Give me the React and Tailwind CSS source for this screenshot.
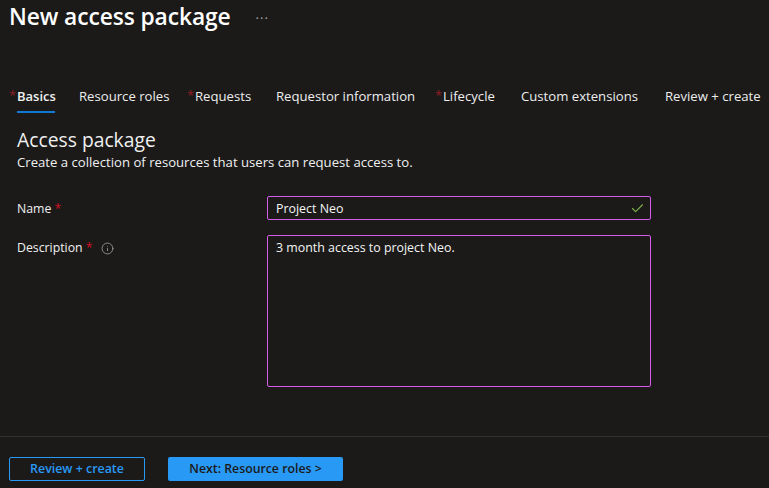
import { Check, Info } from "lucide-react";

const tabs = [
  { label: "Basics", width: "w-[62px]", required: true, active: true },
  { label: "Resource roles", width: "w-[116px]" },
  { label: "Requests", width: "w-[81px]", required: true },
  { label: "Requestor information", width: "w-[167px]" },
  { label: "Lifecycle", width: "w-[78px]", required: true },
  { label: "Custom extensions", width: "w-[144px]" },
  { label: "Review + create", width: "w-[104px]" },
];

function Tab({ label, width, required, active }) {
  return (
    <div className={`relative shrink-0 whitespace-nowrap ${width}`}>
      {required && (
        <span className="absolute -left-[8px] -top-[1px] text-[13px] leading-[20px] text-[#8f1d26]">*</span>
      )}
      <span className={`block h-[27px] leading-[20px] ${active ? "w-[38px] border-b-2 border-[#0f78d4] text-[13px] font-semibold text-[#f0f0f0]" : "text-[13.15px] text-[#ededed]"}`}>
        {label}
      </span>
    </div>
  );
}

export default function App() {
  return (
    <div className="flex h-[488px] w-[769px] flex-col overflow-hidden bg-[#1b1a19] font-['Open_Sans','Noto_Sans',sans-serif] text-white">
      <div className="flex items-start pl-[9px] pt-[1px]">
        <h1 className="text-[22.8px] font-semibold leading-[32px] tracking-[-0.1px]">New access package</h1>
        <span className="ml-[25px] mt-[7px] text-[13px] leading-[20px] tracking-[1px] text-[#a8a6a4]">···</span>
      </div>

      <div className="mt-[53px] flex pl-[17px]">
        {tabs.map((tab) => (
          <Tab key={tab.label} {...tab} />
        ))}
      </div>

      <div className="px-[17px] pt-[14px]">
        <h2 className="text-[19.3px] leading-[26px] text-[#f0f0f0]">Access package</h2>
        <p className="text-[13.15px] leading-[19px] text-[#f0f0f0]">
          Create a collection of resources that users can request access to.
        </p>

        <div className="mt-[24px] flex">
          <label className="w-[250px] pt-[1px] text-[12.3px] leading-[24px] text-[#f0f0f0]">
            Name <span className="text-[#d10f23]">*</span>
          </label>
          <div className="flex h-[24px] w-[384px] items-center justify-between rounded-[2px] border border-[#d55be8] pl-[8px] pr-[5px] pt-[2px] text-[12.4px] text-[#f5f5f5]">
            <span>Project Neo</span>
            <Check size={15} strokeWidth={1.75} className="-mt-[2px] text-[#7fb24a]" />
          </div>
        </div>

        <div className="mt-[14px] flex">
          <label className="flex w-[250px] items-start pt-[1px] text-[12.3px] leading-[24px] text-[#f0f0f0]">
            <span>
              Description <span className="text-[#d10f23]">*</span>
            </span>
            <Info size={13} strokeWidth={1.5} className="ml-[8px] mt-[6px] text-[#a3a1a0]" />
          </label>
          <div className="h-[152px] w-[384px] rounded-[2px] border border-[#d55be8] pl-[8px] pt-[2px] text-[12.4px] leading-[20px] text-[#f5f5f5]">
            3 month access to project Neo.
          </div>
        </div>
      </div>

      <div className="mt-auto flex h-[52px] gap-[23px] border-t border-[#323130] pl-[9px] pt-[20px]">
        <button className="h-[24px] w-[136px] rounded-[2px] border border-[#2899f5] text-[12.4px] font-semibold leading-[20px] text-[#2899f5]">
          Review + create
        </button>
        <button className="h-[24px] w-[175px] rounded-[2px] bg-[#2899f5] text-[12.3px] font-semibold leading-[20px] text-[#1b1a19]">
          Next: Resource roles &gt;
        </button>
      </div>
    </div>
  );
}
